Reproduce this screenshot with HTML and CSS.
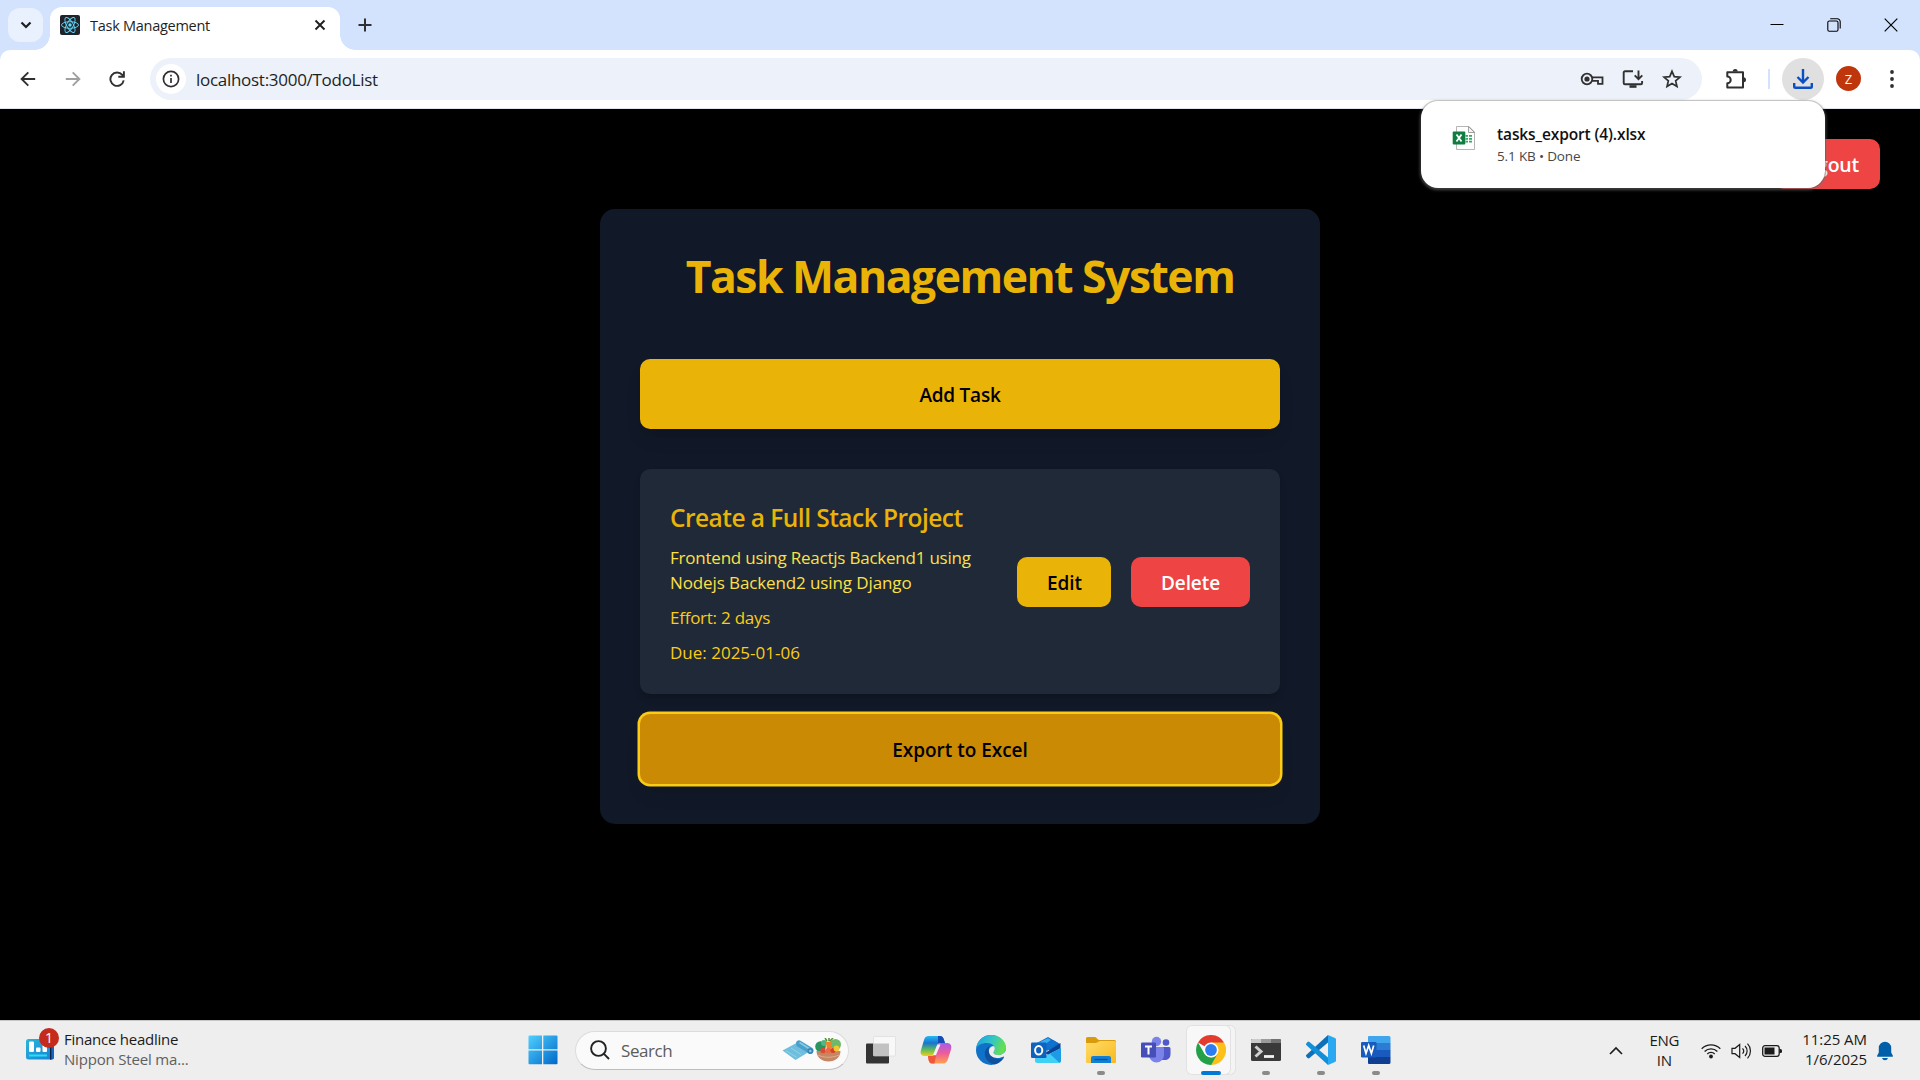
FILE: index.html
```html
<!DOCTYPE html>
<html lang="en">
<head>
<meta charset="utf-8">
<title>Task Management</title>
<link rel="stylesheet" href="styles.css">
</head>
<body>
<div class="screen">
  <header class="tabstrip">
    <button class="tab-search" aria-label="Search tabs"><svg width="14" height="14" viewBox="0 0 14 14"><path d="M2.5 4.5 7 9l4.500-4.500" fill="none" stroke="#1f1f1f" stroke-width="2.200"/></svg></button>
    <div class="tab">
      <svg width="20" height="20" viewBox="0 0 20 20"><rect width="20" height="20" rx="2" fill="#20232a"/><g fill="none" stroke="#61dafb" stroke-width=".9"><ellipse cx="10" cy="10" rx="8.500" ry="3.300"/><ellipse cx="10" cy="10" rx="8.500" ry="3.300" transform="rotate(60 10 10)"/><ellipse cx="10" cy="10" rx="8.500" ry="3.300" transform="rotate(120 10 10)"/></g><circle cx="10" cy="10" r="1.700" fill="#61dafb"/></svg>
      <span class="tab-title">Task Management</span>
      <svg class="tab-close" width="12" height="12" viewBox="0 0 12 12"><path d="M1.500 1.500l9 9m0-9l-9 9" stroke="#1f1f1f" stroke-width="1.900"/></svg>
    </div>
    <svg class="new-tab" width="14" height="14" viewBox="0 0 14 14"><path d="M7 .5v13M.5 7h13" stroke="#303030" stroke-width="2"/></svg>
    <div class="window-controls">
      <svg width="14" height="14" viewBox="0 0 14 14"><path d="M.5 6.500h13" stroke="#000" stroke-width="1"/></svg>
      <svg width="14" height="14" viewBox="0 0 14 14" fill="none" stroke="#000" stroke-width="1.100"><rect x=".8" y="3" width="10.200" height="10.200" rx="1.500"/><path d="M3.200 .8h7a3 3 0 0 1 3 3v6.700"/></svg>
      <svg width="14" height="14" viewBox="0 0 14 14"><path d="M.7 .7l12.600 12.600m0-12.600L.7 13.300" stroke="#000" stroke-width="1.200"/></svg>
    </div>
  </header>

  <div class="toolbar-frame">
  <nav class="toolbar">
    <svg class="nav-icon" width="16" height="16" viewBox="0 0 16 16" fill="none" stroke="#303030" stroke-width="1.900"><path d="M15.200 8H2M8.300 1.300 1.600 8l6.700 6.700"/></svg>
    <svg class="nav-icon" width="16" height="16" viewBox="0 0 16 16" fill="none" stroke="#a0a0a0" stroke-width="1.900"><path d="M.8 8H14M7.700 1.300 14.400 8l-6.700 6.700"/></svg>
    <svg class="nav-icon" width="16" height="16" viewBox="0 0 16 16" fill="none" stroke="#303030" stroke-width="1.900"><path d="M14.700 9.400A6.700 6.700 0 1 1 13.300 3.900l1.400 1.700M14.900 .3v5.500H9.300"/></svg>
    <div class="omnibox">
      <span class="site-info"><svg width="18" height="18" viewBox="0 0 18 18"><circle cx="9" cy="9" r="7.600" fill="none" stroke="#303030" stroke-width="1.700"/><path d="M9 8v5M9 4.700v1.800" stroke="#303030" stroke-width="1.700"/></svg></span>
      <span class="url">localhost:3000/TodoList</span>
      <div class="omni-actions">
        <svg width="24" height="20" viewBox="0 0 24 20" fill="none" stroke="#303030" stroke-width="1.800"><circle cx="7" cy="10" r="5.300"/><circle cx="7" cy="10" r="2.600" fill="#303030" stroke="none"/><path d="M11.700 8.300H22.500V14.800H18V11.800H11.700"/></svg>
        <svg width="22" height="20" viewBox="0 0 22 20" fill="none" stroke="#303030" stroke-width="1.900"><path d="M11 2.200H3A1.300 1.300 0 0 0 1.700 3.500V14A1.300 1.300 0 0 0 3 15.300H18.800A1.300 1.300 0 0 0 20.100 14V12M16.500 1.500V10M12.700 6.300l3.800 3.800 3.800-3.800"/><path d="M7.500 17.500h7" stroke-width="2.600"/></svg>
        <svg width="20" height="20" viewBox="0 0 20 20"><path d="M10 2.300l2.250 5.300 5.800.5-4.400 3.800 1.330 5.600L10 14.500l-4.980 3 1.330-5.600-4.400-3.800 5.800-.5z" fill="none" stroke="#303030" stroke-width="1.700"/></svg>
      </div>
    </div>
    <svg class="extensions" width="22" height="22" viewBox="0 0 22 22"><path d="M2.300 4.200H18V19.600H2.300V15.300A3.400 3.400 0 0 0 2.300 8.500Z" fill="none" stroke="#303030" stroke-width="2" stroke-linejoin="round"/><path d="M7.700 3.500a2.500 2.500 0 0 1 5 0zM18.500 9.300a2.500 2.500 0 0 1 0 5z" fill="#303030"/></svg>
    <span class="separator"></span>
    <span class="download-btn"><svg width="20" height="20" viewBox="0 0 20 20" fill="none" stroke="#0b4fc4" stroke-width="2.400"><path d="M10 0v13M4.500 8l5.500 5.500L15.500 8M1.200 14v3.500a1.300 1.300 0 0 0 1.300 1.300h15a1.300 1.300 0 0 0 1.300-1.300V14"/></svg></span>
    <span class="avatar">Z</span>
    <svg class="kebab" width="6" height="20" viewBox="0 0 6 20" fill="#303030"><circle cx="3" cy="3" r="1.900"/><circle cx="3" cy="10" r="1.900"/><circle cx="3" cy="17" r="1.900"/></svg>
  </nav>
  </div>

  <main class="page">
    <button class="btn btn-red logout">Logout</button>
    <section class="card">
      <h1 class="heading">Task Management System</h1>
      <button class="wide-btn add">Add Task</button>
      <article class="task">
        <div class="task-info">
          <h2 class="task-name">Create a Full Stack Project</h2>
          <p class="task-desc"><span>Frontend using Reactjs Backend1 using</span><br><span class="desc-end">Nodejs Backend2 using Django</span></p>
          <p class="task-meta effort">Effort: 2 days</p>
          <p class="task-meta">Due: 2025-01-06</p>
        </div>
        <div class="task-actions">
          <button class="btn btn-yellow">Edit</button>
          <button class="btn btn-red delete">Delete</button>
        </div>
      </article>
      <button class="wide-btn export">Export to Excel</button>
    </section>
  </main>

  <aside class="download-popup">
    <svg width="24" height="26" viewBox="0 0 24 26"><path d="M4.500 1.500H17l5.500 5.500V24.500h-18z" fill="#fff" stroke="#b5b5b5"/><path d="M16.500 1.500V7.500h6z" fill="#f2f2f2" stroke="#8a8a8a" stroke-width=".8"/><path d="M13.500 10h2.500v1.800h-2.500zM17 10h3v1.800h-3zM13.500 12.900h2.500v1.800h-2.500zM17 12.900h3v1.800h-3zM13.500 15.800h2.500v1.600h-2.500zM17 15.800h3v1.600h-3z" fill="#33a867"/><rect x=".7" y="6.500" width="12.600" height="13" rx="1" fill="#107c41"/><path d="M4.500 9.500l5 7M9.500 9.500l-5 7" stroke="#fff" stroke-width="1.800"/></svg>
    <div class="download-text">
      <div class="file-name">tasks_export (4).xlsx</div>
      <div class="file-state">5.1 KB • Done</div>
    </div>
  </aside>

  <footer class="taskbar">
    <div class="widget">
      <div class="widget-icon">
        <svg width="28" height="21" viewBox="0 0 28 21"><defs><linearGradient id="wg" x2="1" y2="1"><stop stop-color="#28b6d8"/><stop offset="1" stop-color="#1b7fd6"/></linearGradient></defs><rect width="28" height="20.500" rx="2.500" fill="url(#wg)"/><path d="M24 0h1.500A2.500 2.500 0 0 1 28 2.500V18a2.500 2.500 0 0 1-2.500 2.500H24z" fill="#1464c0"/><path d="M24 0h1.300v20.500H24z" fill="#0a1f4a"/><g fill="#fff"><rect x="3" y="2.500" width="5" height="10.500" rx="1.200"/><rect x="10" y="8.500" width="4.500" height="4.500" rx="1"/><rect x="16.500" y="4.500" width="4.500" height="8.500" rx="1"/></g><path d="M3 16.500h18" stroke="#25e0f5" stroke-width="2"/></svg>
        <span class="badge">1</span>
      </div>
      <div class="widget-text"><div class="widget-title">Finance headline</div><div class="widget-sub">Nippon Steel ma...</div></div>
    </div>

    <div class="apps">
      <svg class="start" width="30" height="30" viewBox="0 0 30 30"><defs><linearGradient id="st" x2="1" y2="1"><stop stop-color="#4fd0ff"/><stop offset="1" stop-color="#0067c8"/></linearGradient></defs><path d="M1.500.5H14v13.800H.5V1.500a1 1 0 0 1 1-1zM15.300.5h13.200a1 1 0 0 1 1 1v12.800H15.300zM.5 15.500H14v13.800H1.500a1 1 0 0 1-1-1zM15.300 15.500h14.200v12.800a1 1 0 0 1-1 1H15.300z" fill="url(#st)"/></svg>
      <div class="search">
        <svg width="20" height="20" viewBox="0 0 20 20" fill="none" stroke="#222" stroke-width="1.900"><circle cx="8.500" cy="8.500" r="7.400"/><path d="M13.700 13.700l5.300 5.300"/></svg>
        <span class="search-label">Search</span>
        <div class="search-art">
          <svg width="32" height="22" viewBox="0 0 32 22"><path d="M.5 11.500L14.500 4l13 8.500-14 8.500z" fill="#6fbedd"/><path d="M4 11.700l10.500 6.500M9 9l10 6.500" stroke="#93d2ea" stroke-width="1"/><path d="M14 4.500a3 3 0 0 1 4.500-2.800L30 8.800a3.300 3.300 0 0 1-2.500 6L14.500 7z" fill="#4ba0ca"/><path d="M17.500 3.500l11 7" stroke="#84cbe8" stroke-width="1.600"/><circle cx="28.300" cy="12" r="2.900" fill="#3585b3"/><circle cx="28.300" cy="12" r="1.200" fill="#8cc8df"/></svg>
          <svg width="27" height="24" viewBox="0 0 27 24"><circle cx="5.500" cy="8.500" r="5.300" fill="#28945f"/><circle cx="20.500" cy="6.500" r="5.500" fill="#70b86b"/><circle cx="9" cy="5" r="3" fill="#51b681"/><path d="M11 4l6-1-1 10-4 1z" fill="#f08228"/><path d="M12 3l-2-3M14 3V0M15 3l3-3" stroke="#569636" stroke-width="1.600"/><path d="M1.500 13h24c0 6-5 10.500-12 10.500S1.500 19 1.500 13z" fill="#c58664"/><path d="M3 17c5 3 15 3 21 0" stroke="#e0ac8e" fill="none"/><circle cx="8" cy="12.500" r="2.700" fill="#de4934"/><circle cx="13.500" cy="12.500" r="2.700" fill="#ef6845"/><circle cx="18" cy="12.500" r="2.500" fill="#d93e2d"/><circle cx="21.500" cy="10.500" r="2.900" fill="#f3c72e"/></svg>
        </div>
      </div>

      <div class="app"><svg width="30" height="30" viewBox="0 0 30 30"><rect y="8.500" width="23" height="20" rx="1" fill="#343434"/><rect x="7.500" y="1.500" width="22" height="19.500" rx="1" fill="#f8f8f8" stroke="#d6d6d6" stroke-width=".6"/><rect x="7.500" y="8.500" width="15.500" height="12.500" fill="#c2c2c2"/></svg></div>

      <div class="app"><svg width="32" height="30" viewBox="0 0 32 30"><defs><linearGradient id="ca" x2="0" y2="1"><stop stop-color="#28b8f1"/><stop offset=".35" stop-color="#1674d0"/><stop offset=".7" stop-color="#64bd58"/><stop offset="1" stop-color="#f5ce16"/></linearGradient><linearGradient id="cb" x2="0" y2="1"><stop stop-color="#a55bea"/><stop offset=".5" stop-color="#ee5c9a"/><stop offset="1" stop-color="#ffa14b"/></linearGradient></defs><path d="M9 1h11c2.500 0 3.500 2 4 4l1 3h-4c-2 0-3.200 1-3.800 3L15 17c-.8 2.500-2 4-4.500 4H5c-4 0-5-2.500-4-6L4 5c.8-2.500 2-4 5-4z" fill="url(#ca)"/><path d="M18 1h2c2.500 0 3.500 2 4 4l1 3h-7z" fill="#164bb8"/><path d="M23 28.500H12c-2.500 0-3-2-3.500-4L8 21h3c2.500 0 3.500-1.500 4-3l2.300-7c.7-2 1.700-3 3.700-3h6c4 0 5 3 4 6.500l-3 9.500c-.8 2.500-2 4.500-5 4.500z" fill="url(#cb)"/><path d="M14.500 28.500H12c-2.500 0-3-2-3.500-4L8 21h8z" fill="#f0583b"/><path d="M17.300 9.500h3.200L16 20h-3z" fill="#f5eef5"/></svg></div>

      <div class="app"><svg width="30" height="30" viewBox="0 0 30 30"><defs><linearGradient id="eg" x2="1" y2=".3"><stop stop-color="#1b9de2"/><stop offset=".55" stop-color="#31c5c8"/><stop offset="1" stop-color="#65df50"/></linearGradient></defs><circle cx="15" cy="15" r="15" fill="#0f72c8"/><path d="M0 14C1 5.500 7.500 0 15 0c8.500 0 15 6 15 12.500 0 5-4 7.500-8 7.500-3 0-4.500-1.200-4.500-2.500 0-1 1.300-1.500 1.300-4 0-2.500-3-5.500-8-5.500C6 8 1.500 10 0 14z" fill="url(#eg)"/><path d="M13.500 11C9 13 7.500 19 10 23.500c2 3.700 6 5.800 9.500 5.800 3.300-1.200 6-3.200 8.200-6.500-4 2-9.500 1.500-12.500-1.700-2.800-3-3.300-7-1.700-10.100z" fill="#10519f"/><path d="M30 14c-.5 4-4.500 6-8 6-3 0-4.500-1.200-4.500-2.500 0-1 1.300-1.500 1.300-4 0-.8-.3-1.500-.8-2.200-3-.8-5.500 2.200-5 5.500.5 4 4 6.200 8 6.200 3 0 5-.7 6.700-1.500L30 24z" fill="#eee"/></svg></div>

      <div class="app"><svg width="30" height="28" viewBox="0 0 30 28"><path d="M4 8L17 1l12 7v6H4z" fill="#126bc4"/><path d="M5 8l12-6 3 2-11 8z" fill="#38aaf0"/><path d="M12 10l10-6 5 3-11 8z" fill="#0e73d0"/><path d="M14 17L29.500 7v6l-9 8z" fill="#0a4396"/><path d="M4 17l11 2.500L30 12v12.500A2.500 2.500 0 0 1 27.500 27h-21A2.500 2.500 0 0 1 4 24.500z" fill="#40cff5"/><path d="M30 12v12.500a2.500 2.500 0 0 1-1.500 2.300L19 18z" fill="#1e9be4"/><rect y="6.500" width="15.500" height="15.500" rx="1.200" fill="#0f62bd"/><ellipse cx="7.700" cy="14.300" rx="3.600" ry="4.200" fill="none" stroke="#fff" stroke-width="2"/></svg></div>

      <div class="app running"><svg width="30" height="28" viewBox="0 0 30 28"><defs><linearGradient id="fg" x2="1" y2="1"><stop stop-color="#ffdc6b"/><stop offset="1" stop-color="#f9b91c"/></linearGradient></defs><path d="M0 2.500A1.500 1.500 0 0 1 1.500 1H9c1.500 0 2.500 3 4 3h15.500A1.500 1.500 0 0 1 30 5.500V10H0z" fill="#d99a0c"/><path d="M0 7h10l4-2h14.500A1.500 1.500 0 0 1 30 6.500V26a1 1 0 0 1-1 1H1a1 1 0 0 1-1-1z" fill="url(#fg)"/><path d="M5 27v-5a2 2 0 0 1 2-2h16a2 2 0 0 1 2 2v5z" fill="#1280d6"/><path d="M8.500 23.500h13" stroke="#0b4f97" stroke-width="1.400"/></svg></div>

      <div class="app"><svg width="30" height="28" viewBox="0 0 30 28"><circle cx="15.500" cy="5.500" r="4.700" fill="#7b83eb"/><circle cx="25" cy="6.500" r="3.300" fill="#5059c9"/><path d="M20 11h8a1.500 1.500 0 0 1 1.500 1.500V18c0 4-2.500 6-6 6h-3z" fill="#5059c9"/><path d="M8 11h13.500A1.500 1.500 0 0 1 23 12.500V19a7.500 7.500 0 0 1-15 0z" fill="#7b83eb"/><rect y="6.500" width="15" height="15" rx="1.200" fill="#464eb8"/><path d="M4 10.500h7M7.500 10.500v8" stroke="#fff" stroke-width="2"/></svg></div>

      <div class="app active"><svg width="30" height="30" viewBox="0 0 30 30"><path d="M15 15L2.010 7.500A15 15 0 0 1 28 7.500z" fill="#e33b2e"/><path d="M15 15V7.500h13A15 15 0 0 1 15 30z" fill="#fdc01a"/><path d="M15 30A15 15 0 0 1 2.010 7.500L8.500 18.750 21.500 18.750z" fill="#24a148"/><path d="M15 30l6.500-11.250L15 15z" fill="#fdc01a"/><path d="M8.500 18.750A7.500 7.500 0 0 0 15 22.500a7.500 7.500 0 0 0 6.500-3.750L15 30z" fill="#24a148"/><circle cx="15" cy="15" r="7.500" fill="#fff"/><circle cx="15" cy="15" r="5.900" fill="#2d7df0"/></svg></div>

      <div class="app running"><svg width="30" height="24" viewBox="0 0 30 24"><rect y="1" width="30" height="22" rx="1.500" fill="#3a3a3a"/><path d="M1.500 1H10v4H0V2.500A1.500 1.500 0 0 1 1.500 1z" fill="#ccc"/><path d="M10 1h10v4H10z" fill="#9b9b9b"/><path d="M20 1h8.500A1.500 1.500 0 0 1 30 2.500V5H20z" fill="#727272"/><path d="M4.500 8.500l5.500 5-5.500 5" fill="none" stroke="#d0d0d0" stroke-width="3"/><path d="M13 18.500h10" stroke="#f2f2f2" stroke-width="2.800"/></svg></div>

      <div class="app running"><svg width="30" height="30" viewBox="0 0 30 30"><path d="M22 0v7.500L3.500 23a1.500 1.500 0 0 1-2 0L.5 21.800a1.300 1.300 0 0 1 0-2z" fill="#0f6fb8"/><path d="M22 30v-7.500L3.500 7a1.500 1.500 0 0 0-2 0L.5 8.200a1.300 1.300 0 0 0 0 2z" fill="#118fd8"/><path d="M22 0l7 3a1.500 1.500 0 0 1 1 1.500v21a1.500 1.500 0 0 1-1 1.500l-7 3z" fill="#2aa9f2"/></svg></div>

      <div class="app running"><svg width="30" height="28" viewBox="0 0 30 28"><path d="M8 0h20a1.500 1.500 0 0 1 1.500 1.500V7H7V1a1 1 0 0 1 1-1z" fill="#41a5ee"/><path d="M7 7h22.500v7H7z" fill="#2b7cd3"/><path d="M7 14h22.500v7H7z" fill="#185abd"/><path d="M7 21h22.500v5.500A1.500 1.500 0 0 1 28 28H8a1 1 0 0 1-1-1z" fill="#103f91"/><rect y="6" width="15.500" height="15.500" rx="1.200" fill="#185abd"/><path d="M2.700 9.500l2.300 8 2.700-8 2.700 8 2.300-8" fill="none" stroke="#fff" stroke-width="1.700"/></svg></div>
    </div>

    <div class="tray">
      <svg class="chevron" width="14" height="10" viewBox="0 0 14 10"><path d="M1 8l6-6 6 6" fill="none" stroke="#1b1b1b" stroke-width="1.600"/></svg>
      <div class="lang">ENG<br>IN</div>
      <div class="status">
        <svg width="20" height="16" viewBox="0 0 20 16" fill="none" stroke="#1b1b1b" stroke-width="1.300"><path d="M.7 5.700a13.200 13.200 0 0 1 18.600 0M3.600 8.500a9 9 0 0 1 12.800 0M6.300 11a5.200 5.200 0 0 1 7.400 0"/><circle cx="10" cy="13.500" r="1.900" fill="#1b1b1b" stroke="none"/></svg>
        <svg width="21" height="18" viewBox="0 0 21 18" fill="none" stroke="#1b1b1b" stroke-width="1.200"><path d="M1 6.300h3L8.700 2.500v13L4 11.700H1zM11.500 6.300a4 4 0 0 1 0 5.400M14 4a7 7 0 0 1 0 10M16.500 1.700a10.500 10.500 0 0 1 0 14.600"/></svg>
        <svg width="20" height="14" viewBox="0 0 20 14"><rect x=".7" y="1.700" width="16.500" height="10.600" rx="2.300" fill="none" stroke="#1b1b1b" stroke-width="1.300"/><rect x="2.500" y="3.500" width="10" height="7" fill="#1b1b1b"/><path d="M17.500 5h1a1.500 1.500 0 0 1 1.500 1.500v1A1.500 1.500 0 0 1 18.500 9h-1z" fill="#1b1b1b"/></svg>
      </div>
      <div class="clock">11:25 AM<br>1/6/2025</div>
      <svg class="bell" width="18" height="20" viewBox="0 0 18 20"><path d="M9 .8A6.200 6.200 0 0 1 15.200 7v4.500l1.700 3.200a.7.7 0 0 1-.6 1H1.700a.7.7 0 0 1-.6-1l1.700-3.200V7A6.200 6.200 0 0 1 9 .8zM6 17h6a3.100 3.100 0 0 1-6 0z" fill="#005fa8"/></svg>
    </div>
  </footer>
</div>
</body>
</html>
```
FILE: styles.css
```css
* { box-sizing: border-box; margin: 0; padding: 0; }
body { background: #000; font-family: "Open Sans", "Noto Sans", sans-serif; }
button { border: 0; font-family: inherit; }
svg { display: block; flex: none; }

.screen { position: relative; width: 1920px; height: 1080px; overflow: hidden; display: flex; flex-direction: column; }

/* Browser tab strip */
.tabstrip { height: 50px; background: #d3e3fd; display: flex; align-items: center; padding-left: 8px; flex: none; }
.tab-search { width: 35px; height: 34px; border-radius: 12px; background: #e9f1fe; display: flex; align-items: center; justify-content: center; }
.tab { position: relative; align-self: flex-end; width: 290px; height: 43px; margin-left: 7px; padding: 0 14px 7px 10px; border-radius: 12px 12px 0 0; background: #fff; display: flex; align-items: center; }
.tab::before, .tab::after { content: ""; position: absolute; bottom: 0; width: 15px; height: 15px; }
.tab::before { left: -15px; background: radial-gradient(circle at 0 0, transparent 14.500px, #fff 15px); }
.tab::after { right: -15px; background: radial-gradient(circle at 100% 0, transparent 14.500px, #fff 15px); }
.tab-title { margin-left: 10px; font-size: 14.500px; letter-spacing: -.27px; color: #1f1f1f; }
.tab-close { margin-left: auto; }
.new-tab { margin-left: 18px; }
.window-controls { margin-left: auto; margin-right: 22px; display: flex; gap: 43px; }

/* Toolbar */
.toolbar-frame { flex: none; background: #d3e3fd; }
.toolbar { height: 59px; padding: 0 25px 1px 20px; border-bottom: 1px solid #dfe3ea; border-radius: 10px 10px 0 0; background: #fff; display: flex; align-items: center; }
.nav-icon { margin-right: 29px; }
.nav-icon + .nav-icon { margin-left: -.5px; }
.omnibox { width: 1552px; height: 42px; margin-left: -4px; padding: 0 20px 0 6px; border-radius: 21px; background: #ecf1fa; display: flex; align-items: center; }
.site-info { width: 30px; height: 30px; border-radius: 50%; background: #fff; display: flex; align-items: center; justify-content: center; }
.url { margin-left: 10px; padding-top: 1px; font-size: 17px; letter-spacing: -.285px; color: #1f1f1f; }
.omni-actions { margin-left: auto; display: flex; align-items: center; gap: 18px; }
.extensions { margin-left: 23px; }
.separator { width: 2px; height: 20px; margin-left: 21px; background: #d3e3fd; }
.download-btn { width: 42px; height: 42px; margin-left: 12px; border-radius: 50%; background: #e0e0e0; display: flex; align-items: center; justify-content: center; flex: none; }
.avatar { width: 25px; height: 25px; margin-left: 12px; border-radius: 50%; background: #bf360c; color: #fff; font-size: 13px; display: flex; align-items: center; justify-content: center; flex: none; }
.kebab { margin-left: auto; }

/* Web page */
.page { flex: 1; background: #000; display: flex; flex-direction: column; align-items: center; padding-top: 30px; }
.btn { height: 50px; padding: 2px 30px 0; border-radius: 10px; font-size: 19px; font-weight: 600; letter-spacing: -.1px; color: #000; }
.btn-yellow { width: 94px; background: #eab308; }
.btn-red { background: #ef4444; color: #fff; }
.logout { align-self: flex-end; width: 106px; margin-right: 40px; padding: 1px 20px 0; font-size: 19.500px; text-align: center; letter-spacing: -.2px; }
.delete { width: 119px; }
.card { width: 720px; margin-top: 20px; padding: 40px; border-radius: 15px; background: #111827; display: flex; flex-direction: column; }
.heading { height: 50px; line-height: 54px; margin-bottom: 60px; text-align: center; color: #eab308; font-size: 44.500px; font-weight: 700; letter-spacing: -1.500px; white-space: nowrap; }
.wide-btn { height: 70px; padding-top: 2px; border-radius: 10px; font-size: 19px; font-weight: 600; color: #000; box-shadow: 0 12px 19px -4px rgba(0,0,0,.1), 0 5px 8px -5px rgba(0,0,0,.1); }
.add { background: #eab308; letter-spacing: -.25px; }
.task { height: 225px; margin: 40px 0 20px; padding: 30px; border-radius: 10px; background: #1f2937; box-shadow: 0 5px 8px -1px rgba(0,0,0,.1), 0 3px 5px -2px rgba(0,0,0,.1); display: flex; justify-content: space-between; align-items: center; }
.task-info { padding-top: 2px; }
.task-name { line-height: 36px; height: 35px; margin-bottom: 10px; font-size: 24.500px; font-weight: 600; letter-spacing: -.54px; color: #eab308; }
.task-desc, .task-meta { font-size: 17px; line-height: 25px; white-space: nowrap; }
.task-desc { margin-bottom: 10px; color: #fde047; letter-spacing: -.225px; }
.desc-end { letter-spacing: -.11px; }
.task-meta { color: #facc15; letter-spacing: 0; }
.effort { margin-bottom: 10px; letter-spacing: -.25px; }
.task-actions { display: flex; gap: 20px; }
.export { background: #ca8a04; box-shadow: 0 0 0 2.500px #facc15, 0 12px 19px -4px rgba(0,0,0,.1); letter-spacing: -.02px; }

/* Download bubble, over the page */
.download-popup { position: absolute; left: 1421px; top: 101px; width: 404px; height: 87px; padding: 24px 31px; border-radius: 17px; background: #fff; box-shadow: 0 0 0 1px rgba(0,0,0,.13), 0 1px 3px 1px rgba(120,120,120,.6); display: flex; gap: 21px; }
.download-text { margin-top: -3px; color: #1f1f1f; white-space: nowrap; }
.file-name { font-size: 15.500px; font-weight: 600; line-height: 24px; letter-spacing: -.12px; color: #111; }
.file-state { font-size: 13.500px; line-height: 20px; letter-spacing: -.15px; color: #474747; }

/* Taskbar */
.taskbar { height: 60px; flex: none; background: #eee; border-top: 1px solid #c8c8c8; display: flex; align-items: center; justify-content: space-between; }
.widget { width: 516px; padding-left: 26px; display: flex; align-items: center; }
.widget-icon { position: relative; margin-top: -2px; }
.badge { position: absolute; left: 13px; top: -11px; width: 20px; height: 20px; border-radius: 50%; background: #c42b1c; color: #fff; font-size: 14px; line-height: 20px; text-align: center; }
.widget-text { margin-left: 10px; padding-bottom: 4px; font-size: 15px; line-height: 20px; white-space: nowrap; }
.widget-title { color: #1b1b1b; letter-spacing: -.245px; }
.widget-sub { color: #606060; letter-spacing: -.18px; }
.apps { display: flex; align-items: center; padding-bottom: 1px; }
.start { margin: 0 17px 0 12px; }
.search { width: 274px; height: 39px; margin-right: 4px; padding: 0 6px 0 14px; border-radius: 20px; background: #fafafa; border: 1px solid #dcdcdc; border-bottom-color: #bdbdbd; display: flex; align-items: center; }
.search-label { margin-left: 11px; font-size: 17px; letter-spacing: -.42px; color: #5c5c5c; }
.search-art { margin-left: auto; display: flex; align-items: center; gap: 1px; }
.app { position: relative; width: 55px; height: 59px; display: flex; align-items: center; justify-content: center; }
.app svg { position: relative; }
.running::after, .active::after { content: ""; position: absolute; bottom: 5px; left: 50%; width: 8px; height: 4px; margin-left: -4px; border-radius: 2px; background: #8a8a8a; }
.active::after { width: 20px; margin-left: -10px; background: #0078d4; }
.active::before { content: ""; position: absolute; left: 4px; top: 5px; width: 43px; height: 48px; border-radius: 5px; background: #f8f8f8; box-shadow: 0 0 0 1px #e2e2e2, 5px 0 0 0 #f4f4f4, 5px 0 0 1px #e2e2e2; }
.tray { width: 517px; padding-right: 26px; display: flex; align-items: center; justify-content: flex-end; color: #1b1b1b; }
.lang { width: 40px; margin: 0 17px 0 21px; padding-bottom: 2px; font-size: 15px; line-height: 20px; letter-spacing: -.31px; text-align: center; }
.status { display: flex; align-items: center; gap: 10px; }
.clock { margin: 0 9px 0 20px; padding-bottom: 4px; font-size: 15px; line-height: 20px; letter-spacing: -.05px; text-align: right; white-space: nowrap; }
```
